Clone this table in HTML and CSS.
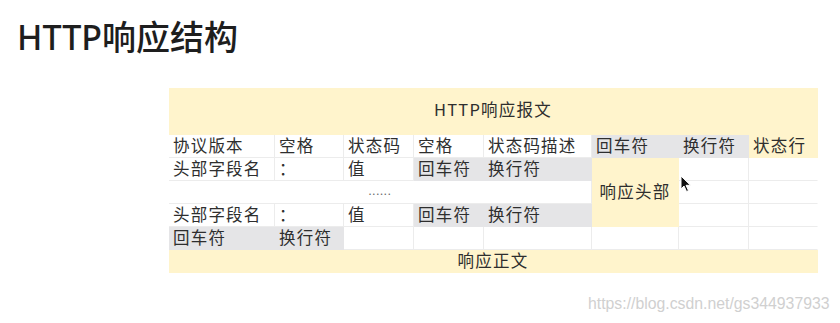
FILE: index.html
```html
<!DOCTYPE html>
<html lang="zh-CN">
<head>
<meta charset="utf-8">
<title>HTTP响应结构</title>
<link rel="stylesheet" href="styles.css">
</head>
<body>
<div class="slide">
  <h1 class="title">HTTP响应结构</h1>
  <div class="table">
    <div class="cell yellow span-all head">HTTP响应报文</div>

    <div class="cell">协议版本</div>
    <div class="cell">空格</div>
    <div class="cell">状态码</div>
    <div class="cell">空格</div>
    <div class="cell">状态码描述</div>
    <div class="cell gray">回车符</div>
    <div class="cell gray">换行符</div>
    <div class="cell yellow last">状态行</div>

    <div class="cell">头部字段名</div>
    <div class="cell">：</div>
    <div class="cell">值</div>
    <div class="cell gray">回车符</div>
    <div class="cell gray">换行符</div>
    <div class="cell yellow center rows3">响应头部</div>
    <div class="cell"></div>
    <div class="cell last"></div>

    <div class="cell span5 center dots">......</div>
    <div class="cell"></div>
    <div class="cell last"></div>

    <div class="cell">头部字段名</div>
    <div class="cell">：</div>
    <div class="cell">值</div>
    <div class="cell gray">回车符</div>
    <div class="cell gray">换行符</div>
    <div class="cell"></div>
    <div class="cell last"></div>

    <div class="cell gray">回车符</div>
    <div class="cell gray">换行符</div>
    <div class="cell"></div>
    <div class="cell"></div>
    <div class="cell"></div>
    <div class="cell"></div>
    <div class="cell"></div>
    <div class="cell last"></div>

    <div class="cell yellow span-all center">响应正文</div>
  </div>
  <svg class="cursor" width="12" height="18" viewBox="0 0 12 18">
    <path d="M1 1 L1 14 L4 11 L6.5 16.5 L8.5 15.6 L6 10.3 L10.5 10.3 Z" fill="#111" stroke="#fff" stroke-width="1"/>
  </svg>
  <div class="watermark">https://blog.csdn.net/gs344937933</div>
</div>
</body>
</html>
```

FILE: styles.css
```css
* { box-sizing: border-box; }
html, body {
  margin: 0;
  padding: 0;
  background: #ffffff;
}
.slide {
  position: relative;
  width: 840px;
  height: 323px;
  padding: 15px 0 0 0;
  font-family: "Noto Sans CJK SC", "Noto Sans", sans-serif;
}
.title {
  margin: 0 0 0 17px;
  font-family: "Noto Sans", "Noto Sans CJK SC", sans-serif;
  font-size: 34px;
  line-height: 44px;
  font-weight: 500;
  color: #1e1e1e;
  letter-spacing: 0;
}
.table {
  display: grid;
  grid-template-columns: 106px 69px 70px 70px 108px 87px 70px 69px;
  grid-template-rows: 47px repeat(6, 23px);
  margin: 29px 0 0 169px;
  width: 649px;
  font-size: 16.5px;
  letter-spacing: 1.2px;
  color: #2e2e2e;
}
.cell {
  display: flex;
  align-items: center;
  padding: 0 0 1px 4px;
  line-height: 1;
  border-right: 1px solid #ececec;
  border-bottom: 1px solid #ececec;
  background: #ffffff;
  white-space: nowrap;
}
.cell.last { border-right-color: transparent; }
.yellow {
  background: #fff4cc;
  border-color: #fff4cc;
}
.gray {
  background: #e5e5e7;
  border-color: #e5e5e7;
}
.span-all { grid-column: 1 / -1; }
.span5 { grid-column: span 5; }
.rows3 { grid-row: span 3; }
.center { justify-content: center; padding-left: 0; }
.head {
  justify-content: center;
  padding: 0 0 4px 0;
}
.dots {
  font-size: 11px;
  letter-spacing: 0.8px;
  color: #666;
  padding-bottom: 4px;
}
.cursor {
  position: absolute;
  left: 680px;
  top: 175px;
}
.watermark {
  position: absolute;
  left: 588px;
  top: 295px;
  font-family: "Liberation Sans", Arial, sans-serif;
  font-size: 15.8px;
  color: #d0d0d0;
  letter-spacing: 0;
}
```
